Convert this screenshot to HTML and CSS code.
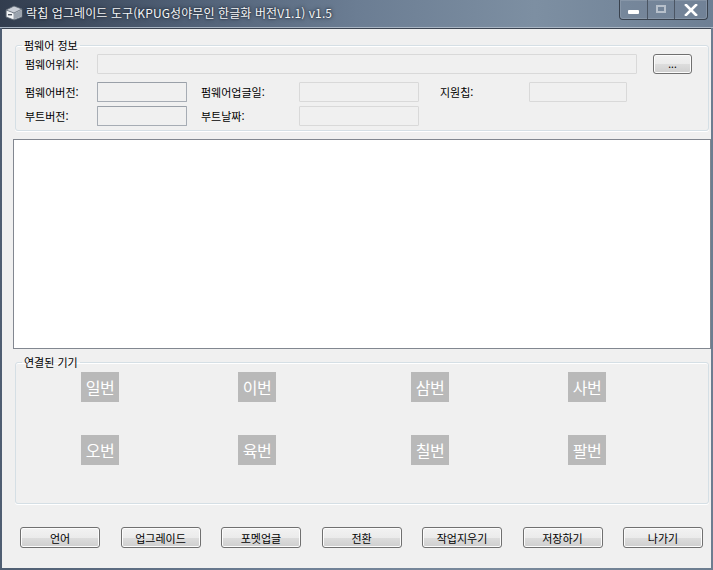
FILE: index.html
```
<!DOCTYPE html>
<html lang="ko">
<head>
<meta charset="utf-8">
<title>락칩 업그레이드 도구</title>
<link rel="stylesheet" href="styles.css">
</head>
<body>
<div class="window">
  <div class="titlebar">
    <svg class="app-icon" width="18" height="16" viewBox="0 0 18 16">
      <path d="M1 5 L9 1 L17 4 L17 12 L9 15 L1 12 Z" fill="#c9ced6" stroke="#5b6470" stroke-width="0.8"/>
      <path d="M1 5 L9 8 L17 4" fill="none" stroke="#5b6470" stroke-width="0.8"/>
      <path d="M9 8 L9 15" stroke="#5b6470" stroke-width="0.8"/>
      <path d="M2 6 L8.5 8.6 L8.5 14 L2 11.5 Z" fill="#f4f5f7"/>
      <path d="M9.5 8.6 L16 5.2 L16 11.4 L9.5 14 Z" fill="#9aa3ae"/>
      <rect x="3" y="9" width="4" height="1.4" fill="#4d5560"/>
    </svg>
    <span class="title">락칩 업그레이드 도구(KPUG성야무인 한글화 버전V1.1) v1.5</span>
    <div class="controls">
      <div class="ctl ctl-min"><span class="min-bar"></span></div>
      <div class="ctl ctl-max"><span class="max-box"></span></div>
      <div class="ctl ctl-close">
        <svg width="14" height="12" viewBox="0 0 14 12"><path d="M2 1 L12 11 M12 1 L2 11" stroke="#ffffff" stroke-width="2.6" stroke-linecap="square"/></svg>
      </div>
    </div>
  </div>
  <div class="client">
    <fieldset class="group group-info">
      <legend>펌웨어 정보</legend>
      <div class="row row-path">
        <span class="lbl lbl-a">펌웨어위치:</span>
        <span class="field field-path light"></span>
        <button class="btn btn-browse">...</button>
      </div>
      <div class="row row-ver">
        <span class="lbl lbl-a">펌웨어버전:</span>
        <span class="field field-s dark"></span>
        <span class="lbl lbl-b">펌웨어업글일:</span>
        <span class="field field-m light"></span>
        <span class="lbl lbl-c">지원칩:</span>
        <span class="field field-chip light"></span>
      </div>
      <div class="row row-boot">
        <span class="lbl lbl-a">부트버전:</span>
        <span class="field field-s dark"></span>
        <span class="lbl lbl-b">부트날짜:</span>
        <span class="field field-m light"></span>
      </div>
    </fieldset>

    <div class="log"></div>

    <fieldset class="group group-dev">
      <legend>연결된 기기</legend>
      <div class="tiles">
        <span class="tile">일번</span>
        <span class="tile">이번</span>
        <span class="tile">삼번</span>
        <span class="tile">사번</span>
        <span class="tile">오번</span>
        <span class="tile">육번</span>
        <span class="tile">칠번</span>
        <span class="tile">팔번</span>
      </div>
    </fieldset>

    <div class="buttons">
      <button class="btn btn-main">언어</button>
      <button class="btn btn-main">업그레이드</button>
      <button class="btn btn-main">포멧업글</button>
      <button class="btn btn-main">전환</button>
      <button class="btn btn-main">작업지우기</button>
      <button class="btn btn-main">저장하기</button>
      <button class="btn btn-main">나가기</button>
    </div>
  </div>
</div>
</body>
</html>
```
FILE: styles.css
```
* { box-sizing: border-box; }
html, body { margin: 0; padding: 0; }
body {
  width: 713px;
  height: 570px;
  overflow: hidden;
  font-family: "Noto Sans CJK KR", "Noto Sans", sans-serif;
  font-size: 11px;
  color: #000;
}
.window {
  width: 713px;
  height: 570px;
  background: linear-gradient(90deg, #4f5e72 0%, #6f8096 40%, #7a8a9c 70%, #6c7d90 100%);
  padding: 0 2px 2px 2px;
  display: flex;
  flex-direction: column;
}
.titlebar {
  height: 28px;
  display: flex;
  align-items: flex-start;
  background: linear-gradient(90deg, #323d4e 0%, #4f5f75 25%, #6b7d93 50%, #7d8fa2 75%, #6d7f94 100%);
  margin: 0 -2px;
  padding-left: 5px;
  border-bottom: 1px solid #aab6c4;
}
.app-icon { margin-top: 5px; flex: none; }
.title {
  margin-left: 3px;
  margin-top: 5px;
  color: #f4f6f8;
  font-size: 12px;
  line-height: 16px;
  letter-spacing: 0.1px;
  text-shadow: 0 0 4px #1d2530, 0 0 2px #1d2530;
  white-space: nowrap;
}
.controls {
  margin-left: auto;
  margin-right: 5px;
  display: flex;
  height: 20px;
  border: 1px solid #39424e;
  border-top: none;
  border-radius: 0 0 4px 4px;
  overflow: hidden;
  box-shadow: inset 0 0 0 1px rgba(255,255,255,0.2);
}
.ctl {
  display: flex;
  align-items: center;
  justify-content: center;
  height: 19px;
  background: rgba(120,135,155,0.35);
}
.ctl-min { width: 28px; border-right: 1px solid #4b5563; }
.ctl-max { width: 27px; border-right: 1px solid #4b5563; }
.ctl-close { width: 32px; }
.min-bar { width: 11px; height: 4px; background: #fff; margin-top: 5px; border-radius: 1px; }
.max-box { width: 10px; height: 8px; border: 2px solid #b7c0cb; margin-bottom: 2px; }

.client {
  flex: 1;
  background: #f0f0f0;
  border-top: 1px solid #3b4451;
  display: flex;
  flex-direction: column;
}

.group {
  margin: 0;
  border: 1px solid #d5dfe5;
  border-radius: 3px;
  box-shadow: 0 1px 0 #ffffff, inset 0 1px 0 #ffffff;
  padding: 0 6px;
  min-inline-size: 0;
}
.group legend {
  padding: 0 2px;
  font-size: 11px;
  line-height: 12px;
  height: 12px;
}
.group-info {
  margin: 10px 0 0 13px;
  width: 694px;
  height: 92px;
  padding-left: 6px;
  padding-right: 6px;
}
.row { display: flex; align-items: center; }
.row-path { margin-top: 2px; height: 21px; }
.row-ver { margin-top: 8px; height: 20px; }
.row-boot { margin-top: 4px; height: 20px; }

.lbl { white-space: nowrap; line-height: 14px; }
.lbl-a { width: 72px; margin-left: 3px; }
.lbl-b { width: 98px; margin-left: 14px; }
.lbl-c { width: 89px; margin-left: 21px; }

.field {
  display: block;
  height: 20px;
  background: #f0f0f0;
  border: 1px solid #d9d9d9;
  border-radius: 1px;
}
.field.dark { border-color: #a6acb4; border-top-color: #9aa0a8; }
.field-path { width: 540px; }
.field-s { width: 90px; }
.field-m { width: 120px; }
.field-chip { width: 98px; }

.btn {
  font-family: "Noto Sans CJK KR", "Noto Sans", sans-serif;
  font-size: 11px;
  color: #000;
  border: 1px solid #707070;
  border-radius: 3px;
  background: linear-gradient(#f2f2f2 0%, #ebebeb 50%, #dddddd 51%, #cfcfcf 100%);
  box-shadow: inset 0 0 0 1px #fcfcfc;
  padding: 0;
  line-height: 14px;
}
.btn-browse {
  width: 39px;
  height: 20px;
  margin-left: 16px;
  margin-top: 1px;
  font-size: 10px;
  line-height: 10px;
  letter-spacing: 0;
}

.log {
  margin: 8px 0 0 11px;
  width: 698px;
  height: 210px;
  background: #ffffff;
  border: 1px solid #828790;
}

.group-dev {
  margin: 7px 0 0 13px;
  width: 694px;
  height: 148px;
}
.tiles {
  display: grid;
  grid-template-columns: 157px 173px 157px 38px;
  grid-template-rows: 30px 30px;
  row-gap: 33px;
  margin-top: 4px;
  margin-left: 59px;
}
.tile {
  width: 38px;
  height: 30px;
  background: #b9b9b9;
  color: #ffffff;
  font-size: 16px;
  font-weight: 400;
  display: flex;
  align-items: center;
  justify-content: center;
  letter-spacing: -0.5px;
}

.buttons {
  margin: 23px 0 0 18px;
  width: 683px;
  display: flex;
  justify-content: space-between;
}
.btn-main { width: 80px; height: 21px; }
```
